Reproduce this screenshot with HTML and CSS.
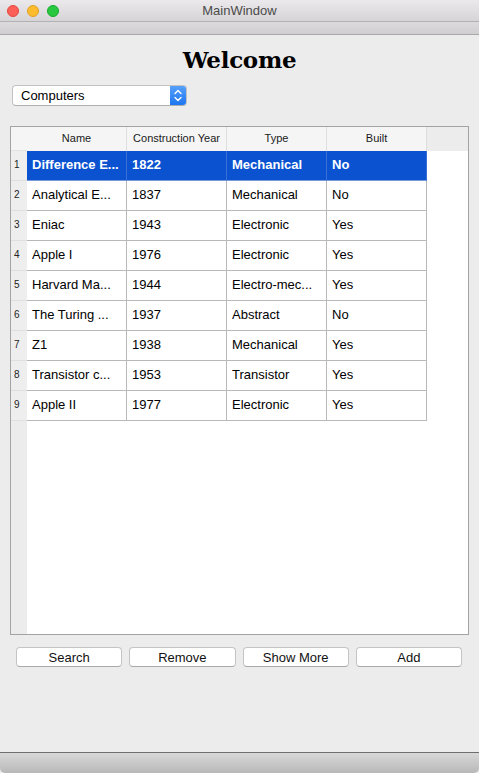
FILE: index.html
```html
<!DOCTYPE html>
<html>
<head>
<meta charset="utf-8">
<link rel="stylesheet" href="styles.css">
</head>
<body>
<div class="window">
  <div class="titlebar">
    <div class="lights">
      <span class="light red"></span>
      <span class="light yellow"></span>
      <span class="light green"></span>
    </div>
    <div class="title">MainWindow</div>
  </div>
  <div class="toolbar"></div>
  <div class="content">
    <h1 class="welcome">Welcome</h1>
    <div class="combo">
      <span class="combo-text">Computers</span>
      <span class="combo-arrows">
        <svg width="16" height="21" viewBox="0 0 16 21">
          <path d="M5 8.5 L8 5.5 L11 8.5" fill="none" stroke="#fff" stroke-width="1.4" stroke-linecap="round" stroke-linejoin="round"/>
          <path d="M5 12.5 L8 15.5 L11 12.5" fill="none" stroke="#fff" stroke-width="1.4" stroke-linecap="round" stroke-linejoin="round"/>
        </svg>
      </span>
    </div>
    <div class="table">
      <div class="hcorner"></div>
      <div class="hcell">Name</div>
      <div class="hcell">Construction Year</div>
      <div class="hcell">Type</div>
      <div class="hcell">Built</div>
      <div class="hfill"></div>

      <div class="vh">1</div>
      <div class="cell sel">Difference E...</div>
      <div class="cell sel">1822</div>
      <div class="cell sel">Mechanical</div>
      <div class="cell sel">No</div>
      <div class="fill"></div>

      <div class="vh">2</div>
      <div class="cell">Analytical E...</div>
      <div class="cell">1837</div>
      <div class="cell">Mechanical</div>
      <div class="cell">No</div>
      <div class="fill"></div>

      <div class="vh">3</div>
      <div class="cell">Eniac</div>
      <div class="cell">1943</div>
      <div class="cell">Electronic</div>
      <div class="cell">Yes</div>
      <div class="fill"></div>

      <div class="vh">4</div>
      <div class="cell">Apple I</div>
      <div class="cell">1976</div>
      <div class="cell">Electronic</div>
      <div class="cell">Yes</div>
      <div class="fill"></div>

      <div class="vh">5</div>
      <div class="cell">Harvard Ma...</div>
      <div class="cell">1944</div>
      <div class="cell">Electro-mec...</div>
      <div class="cell">Yes</div>
      <div class="fill"></div>

      <div class="vh">6</div>
      <div class="cell">The Turing ...</div>
      <div class="cell">1937</div>
      <div class="cell">Abstract</div>
      <div class="cell">No</div>
      <div class="fill"></div>

      <div class="vh">7</div>
      <div class="cell">Z1</div>
      <div class="cell">1938</div>
      <div class="cell">Mechanical</div>
      <div class="cell">Yes</div>
      <div class="fill"></div>

      <div class="vh">8</div>
      <div class="cell">Transistor c...</div>
      <div class="cell">1953</div>
      <div class="cell">Transistor</div>
      <div class="cell">Yes</div>
      <div class="fill"></div>

      <div class="vh">9</div>
      <div class="cell">Apple II</div>
      <div class="cell">1977</div>
      <div class="cell">Electronic</div>
      <div class="cell">Yes</div>
      <div class="fill"></div>

      <div class="vh-rest"></div>
      <div class="rest"></div>
    </div>
    <div class="buttons">
      <button class="btn">Search</button>
      <button class="btn">Remove</button>
      <button class="btn">Show More</button>
      <button class="btn">Add</button>
    </div>
  </div>
  <div class="statusbar"></div>
</div>
</body>
</html>
```
FILE: styles.css
```css
html, body {
  margin: 0;
  padding: 0;
  background: #ececec;
}
body {
  font-family: "Liberation Sans", Arial, sans-serif;
  color: #000;
}
.window {
  width: 479px;
  height: 773px;
  display: flex;
  flex-direction: column;
  background: #ececec;
  overflow: hidden;
}
.titlebar {
  height: 21px;
  flex: none;
  background: linear-gradient(#ebe9eb, #d6d4d6);
  border-bottom: 1px solid #b1b1b1;
  display: flex;
  align-items: center;
  position: relative;
}
.lights {
  display: flex;
  gap: 8px;
  padding-left: 7px;
}
.light {
  width: 12px;
  height: 12px;
  border-radius: 50%;
  box-sizing: border-box;
}
.red { background: #fc5f57; border: 1px solid #e2463f; }
.yellow { background: #fdbc2e; border: 1px solid #e0a028; }
.green { background: #28c840; border: 1px solid #17a92b; }
.title {
  position: absolute;
  left: 0;
  right: 0;
  top: 0;
  line-height: 22px;
  text-align: center;
  font-size: 13px;
  color: #4b4b4b;
  pointer-events: none;
}
.toolbar {
  height: 12px;
  flex: none;
  background: linear-gradient(#dcdadc, #d0ced0);
  border-bottom: 1px solid #a9a9a9;
}
.content {
  flex: 1;
  display: flex;
  flex-direction: column;
}
.welcome {
  margin: 10px 0 0 0;
  height: 30px;
  line-height: 30px;
  text-align: center;
  font-family: "DejaVu Serif", "Liberation Serif", serif;
  font-weight: bold;
  font-size: 23px;
  letter-spacing: -0.3px;
}
.combo {
  margin: 10px 0 0 12px;
  width: 175px;
  height: 21px;
  box-sizing: border-box;
  background: #fff;
  border: 1px solid #c2c2c2;
  border-bottom-color: #aeaeae;
  border-radius: 4px;
  display: flex;
  align-items: center;
  overflow: hidden;
}
.combo-text {
  flex: 1;
  padding-left: 8px;
  font-size: 13px;
}
.combo-arrows {
  width: 16px;
  height: 21px;
  background: linear-gradient(#59a2fb, #1a74f0);
  display: flex;
}
.table {
  margin: 20px 0 0 10px;
  width: 459px;
  height: 509px;
  box-sizing: border-box;
  border: 1px solid #a3a3a3;
  background: #fff;
  display: grid;
  grid-template-columns: 16px 100px 100px 100px 100px 1fr;
  grid-template-rows: 24px repeat(9, 30px) 1fr;
  font-size: 13px;
}
.hcorner {
  background: #f5f5f5;
  border-bottom: 1px solid #e3e3e3;
}
.hcell {
  background: #f5f5f5;
  border-right: 1px solid #dedede;
  font-size: 11px;
  text-align: center;
  line-height: 22px;
  color: #1a1a1a;
  white-space: nowrap;
  overflow: hidden;
}
.hfill {
  background: #ececec;
}
.vh {
  background: #eeeeee;
  border-bottom: 1px solid #e0e0e0;
  font-size: 10px;
  line-height: 28px;
  padding-left: 3px;
  color: #222;
}
.cell {
  box-sizing: border-box;
  border-right: 1px solid #b8b8b8;
  border-bottom: 1px solid #b8b8b8;
  line-height: 28px;
  padding: 0 0 0 5px;
  white-space: nowrap;
  overflow: hidden;
}
.cell.sel {
  background: #0b52d1;
  color: #fff;
  font-weight: bold;
  border-right-color: #3a6fd6;
  border-bottom-color: #7a9bd9;
}
.fill {
  background: #fff;
}
.vh-rest {
  background: #ececec;
}
.rest {
  grid-column: 2 / 7;
  background: #fff;
}
.buttons {
  margin: 12px 0 0 16px;
  width: 446px;
  display: flex;
  gap: 7px;
}
.btn {
  flex: 1;
  height: 20px;
  padding: 0;
  box-sizing: border-box;
  background: #fff;
  border: 1px solid #c4c4c4;
  border-bottom-color: #a9a9a9;
  border-radius: 4px;
  font-family: "Liberation Sans", Arial, sans-serif;
  font-size: 13px;
  color: #111;
}
.statusbar {
  margin-top: auto;
  height: 20px;
  flex: none;
  border-top: 1px solid #6e6e6e;
  background: linear-gradient(#d8d8d8, #b8b8b8);
  border-radius: 0 0 5px 5px;
}
```
